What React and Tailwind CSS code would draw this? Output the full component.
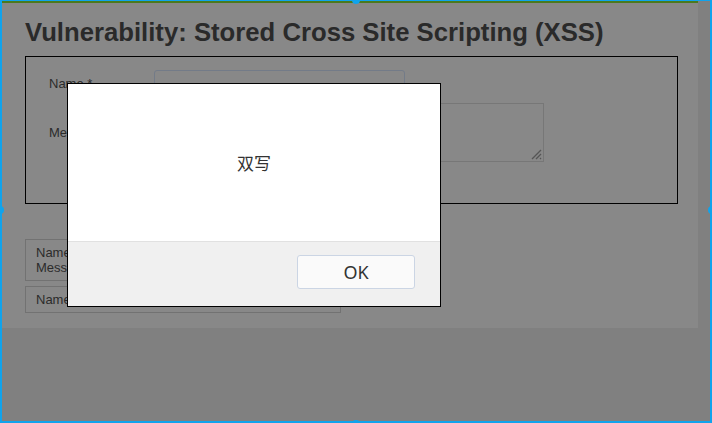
import React from 'react';

const Entry = ({ lines }) => (
  <div className="w-[316px] border border-[#727272] px-[10px] py-[5px] leading-[15px]">
    {lines.map((l) => (
      <div key={l}>{l}</div>
    ))}
  </div>
);

const Handle = ({ className }) => (
  <div className={`absolute h-[8px] w-[8px] rounded-full bg-[#10a3ec] ${className}`} />
);

export default function App() {
  return (
    <div className="relative h-[423px] w-[712px] overflow-hidden bg-[#808080] font-['Liberation_Sans',Arial,sans-serif] text-[13px] text-[#2b2b2b]">
      <div className="flex h-full border-x-2 border-b-2 border-t border-[#10a3ec]">
        {/* dimmed page */}
        <div className="flex h-[327px] w-[696px] flex-col bg-[#888888]">
          <div className="h-[2px] w-full bg-[#4b7a1e]" />
          <div className="pl-[23px] pt-[15px]">
            <h1 className="text-[25.7px] font-bold leading-[28px] text-[#2a2a2a]">
              Vulnerability: Stored Cross Site Scripting (XSS)
            </h1>

            <div className="mt-[10px] h-[148px] w-[653px] border border-black pl-[23px] pt-[13px]">
              <div className="flex items-start">
                <div className="w-[105px] pt-[6px] leading-[15px]">Name *</div>
                <div className="h-[26px] w-[251px] rounded-[3px] border border-[#737b88]" />
              </div>
              <div className="mt-[7px] flex items-start">
                <div className="w-[105px] pt-[22px] leading-[15px]">Message *</div>
                <div className="relative h-[59px] w-[390px] border border-[#777777]">
                  <svg className="absolute bottom-[1px] right-[1px]" width="12" height="12" viewBox="0 0 12 12">
                    <path d="M11 2 L2 11 M11 6 L6 11 M11 10 L10 11" stroke="#555" strokeWidth="1.3" />
                  </svg>
                </div>
              </div>
            </div>

            <div className="mt-[35px] flex flex-col gap-[5px]">
              <Entry lines={['Name: test', 'Message: This is a test comment.']} />
              <Entry lines={['Name: test']} />
            </div>
          </div>
        </div>
        <div className="flex-1" />
      </div>

      {/* alert dialog */}
      <div className="absolute left-[67px] top-[83px] flex h-[224px] w-[374px] flex-col border border-black bg-white font-['Noto_Sans','Noto_Sans_CJK_SC',sans-serif]">
        <div className="flex flex-1 items-center justify-center pt-[2px] text-[17px] text-[#333]">
          双写
        </div>
        <div className="flex h-[65px] items-start justify-end border-t border-[#e1e1e1] bg-[#f0f0f0] pr-[25px] pt-[13px]">
          <button className="h-[34px] w-[118px] rounded-[3px] border border-[#cbd5e4] bg-[#fafafa] text-[18px] leading-none text-[#333]">
            OK
          </button>
        </div>
      </div>

      <Handle className="left-[352px] top-[-4px]" />
      <Handle className="left-[-4px] top-[206px]" />
      <Handle className="right-[-4px] top-[206px]" />
      <Handle className="bottom-[-5px] left-[352px]" />
    </div>
  );
}
